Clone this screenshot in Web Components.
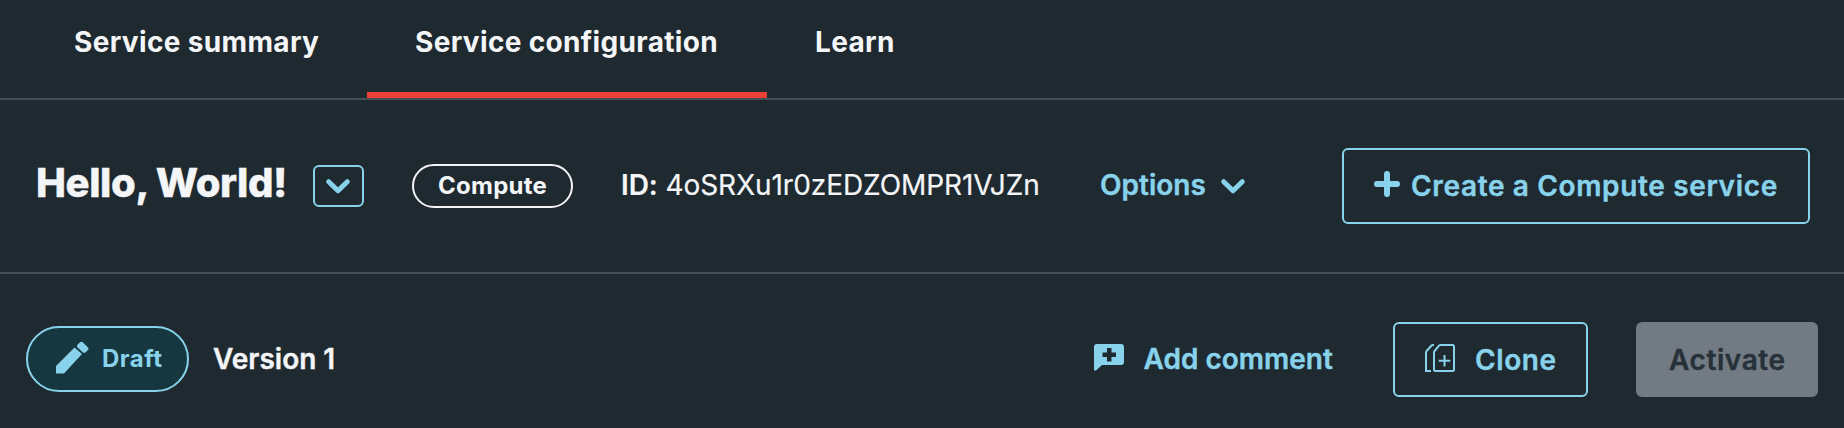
<!DOCTYPE html>
<html lang="en"><head><meta charset="utf-8"><title>Service configuration</title>
<style>
html,body{margin:0;background:#1e2930}
</style></head><body>
<service-page></service-page>
<script>
const define=(name,html,setup)=>{
  const t=document.createElement('template');t.innerHTML=html;
  customElements.define(name,class extends HTMLElement{
    constructor(){super();this.attachShadow({mode:'open'}).append(t.content.cloneNode(true));}
    connectedCallback(){if(setup)setup(this);}
  });
};
const icons={
  chevron:[24,15,'<path d="M2.700 2.700 L12 11.700 L21.300 2.700" fill="none" stroke="currentColor" stroke-width="5" stroke-linecap="round" stroke-linejoin="round"/>'],
  plus:[26,26,'<path d="M13 3V23M3 13H23" fill="none" stroke="currentColor" stroke-width="6" stroke-linecap="round"/>'],
  pencil:[34,34,'<path fill="currentColor" d="M1 32.500V25L19.500 6.500L27 13L9 32.500ZM22 5Q22 4.200 22.600 3.600L24.800 1.400Q26.200 0 27.800 1.200L33 6.400Q34 7.600 33.200 8.800L30.400 11.600Q29.200 12.400 28 11.600L22.600 6.600Q22 6 22 5Z"/>'],
  comment:[30,28,'<path fill="currentColor" fill-rule="evenodd" d="M3 0H27Q30 0 30 3V18Q30 21 27 21H8L2 26.500Q0 27.500 0 25V3Q0 0 3 0ZM13 4V8.500H8.500V13H13V17.500H17.500V13H22V8.500H17.500V4Z"/>'],
  clone:[30,28,'<path fill="none" stroke="currentColor" stroke-width="2" d="M9 1H8Q7 1 6.500 1.500L1.600 7Q1 7.600 1 8.500V27H6M15.500 1H27.500Q29 1 29 2.500V25.500Q29 27 27.500 27H10.500Q9 27 9 25.500V8.500Q9 7.600 9.600 7L14 1.700Q14.600 1 15.500 1ZM19.500 11V22.500M13.700 16.700H25.300"/>']
};
define('ui-icon','',el=>{
  const [w,h,p]=icons[el.getAttribute('name')];
  el.shadowRoot.innerHTML=`<style>:host{display:block;flex:none}svg{display:block;overflow:visible}</style><svg width="${w}" height="${h}" viewBox="0 0 ${w} ${h}" aria-hidden="true">${p}</svg>`;
});
define('ui-tab',`<style>
:host{display:block;box-sizing:border-box;width:var(--w);height:98px;padding:25px 0 0 48px;border-bottom:6px solid transparent;font:700 28px/34px Inter,sans-serif;letter-spacing:.34px;white-space:nowrap;color:#f4f5f7}
:host([active]){border-color:#eb4038}</style><slot></slot>`);
define('tab-bar',`<style>:host{display:flex;box-sizing:border-box;height:100px;padding-left:26px;border-bottom:2px solid #454f56}</style><slot></slot>`);
define('ui-pill',`<style>:host{display:flex;flex:none;box-sizing:border-box;align-items:center;border:2px solid currentColor;border-radius:99px;white-space:nowrap}</style><slot></slot>`);
define('ui-button',`<style>:host{display:flex;flex:none;box-sizing:border-box;align-items:center;border:2px solid #88d3eb;border-radius:6px;color:#88d3eb;font:600 28px/34px Inter,sans-serif;white-space:nowrap}
:host([disabled]){background:#727b83;border-color:#727b83;color:#27313a}</style><slot></slot>`);
define('ui-text',`<style>:host{display:block;flex:none;font:600 28px/34px Inter,sans-serif;white-space:nowrap;-webkit-text-stroke:.4px currentColor}</style><slot></slot>`);
define('service-header',`<style>
:host{display:flex;box-sizing:border-box;height:174px;padding:48px 34px 0 36px;border-bottom:2px solid #454f56;align-items:flex-start;color:#f4f5f7}
.title{width:277px;margin-top:11px;font:800 40px/48px Inter,sans-serif;letter-spacing:-.4px}
.drop{width:51px;height:42px;margin:17px 48px 0 0;padding-left:11px}
.kind{width:161px;height:44px;margin:16px 48px 0 0;padding-left:24px;font:700 24px/30px Inter,sans-serif;letter-spacing:.25px}
.id{width:479px;margin-top:20px;font-weight:400;letter-spacing:-.08px;-webkit-text-stroke-width:.2px}b{font-weight:600}
.opt{width:121px;margin-top:20px;color:#88d3eb}
.chev{margin-top:31px;color:#88d3eb}
.create{width:468px;height:76px;margin-left:auto;padding-left:30px}
.create ui-icon{margin:-5px 11px 0 0}
.create ui-text{letter-spacing:.65px}
</style>
<ui-text class="title">Hello, World!</ui-text>
<ui-button class="drop"><ui-icon name="chevron"></ui-icon></ui-button>
<ui-pill class="kind">Compute</ui-pill>
<ui-text class="id"><b>ID:</b> 4oSRXu1r0zEDZOMPR1VJZn</ui-text>
<ui-text class="opt">Options</ui-text><ui-icon class="chev" name="chevron"></ui-icon>
<ui-button class="create"><ui-icon name="plus"></ui-icon><ui-text>Create a Compute service</ui-text></ui-button>`);
define('version-bar',`<style>
:host{display:flex;box-sizing:border-box;height:154px;padding:48px 26px 0;align-items:flex-start;color:#f4f5f7}
.draft{width:163px;height:66px;margin:4px 24px 0 0;padding-left:27px;background:#163740;color:#88d3eb;font:700 24px/30px Inter,sans-serif;letter-spacing:.5px}
.draft ui-icon{margin:-2px 13px 0 0}
.ver{margin-top:20px}
.add{display:flex;width:299px;margin-left:auto;color:#88d3eb}
.add ui-icon{margin:22px 19.500px 0 0}.add ui-text{margin-top:20px}
.clone{width:195px;height:75px;padding-left:30px;margin-right:48px}
.clone ui-icon{margin:-3px 20px 0 0}
.act{width:182px;height:75px;padding-left:31px}
.clone ui-text,.act ui-text{margin-top:1px;letter-spacing:.6px}
</style>
<ui-pill class="draft"><ui-icon name="pencil"></ui-icon><span>Draft</span></ui-pill>
<ui-text class="ver">Version 1</ui-text>
<div class="add"><ui-icon name="comment"></ui-icon><ui-text>Add comment</ui-text></div>
<ui-button class="clone"><ui-icon name="clone"></ui-icon><ui-text>Clone</ui-text></ui-button>
<ui-button class="act" disabled><ui-text>Activate</ui-text></ui-button>`);
define('service-page',`<style>:host{display:block;height:428px;overflow:hidden;background:#1e2930}</style>
<tab-bar><ui-tab style="--w:341px">Service summary</ui-tab><ui-tab active style="--w:400px">Service configuration</ui-tab><ui-tab>Learn</ui-tab></tab-bar>
<service-header></service-header>
<version-bar></version-bar>`);
</script></body></html>
